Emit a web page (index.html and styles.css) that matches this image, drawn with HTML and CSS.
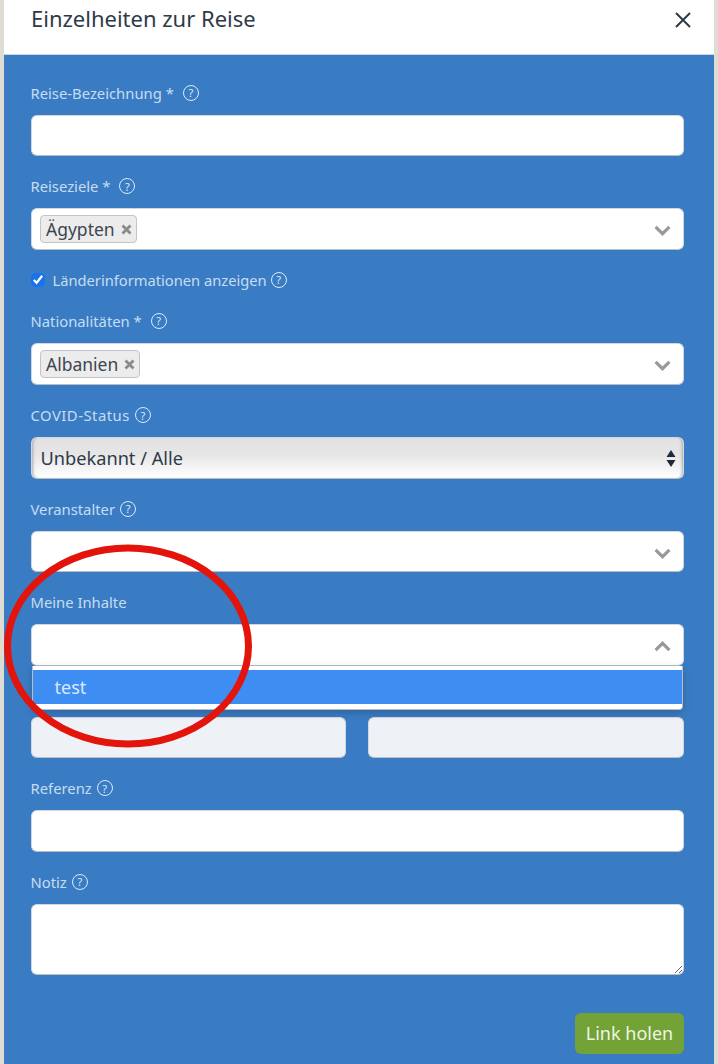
FILE: index.html
```html
<!DOCTYPE html>
<html lang="de">
<head>
    <meta charset="UTF-8">
    <meta name="viewport" content="width=device-width, initial-scale=1.0">
    <title>Einzelheiten zur Reise</title>
    <link rel="stylesheet" href="styles.css">
</head>
<body>
    <div class="modal">
        <header class="modal-header">
            <h1>Einzelheiten zur Reise</h1>
            <button type="button" class="close" aria-label="Schließen">
                <svg width="16" height="16" viewBox="0 0 16 16"><path d="M1 1 15 15M15 1 1 15" stroke="#2f3a47" stroke-width="2" fill="none"/></svg>
            </button>
        </header>
        <form class="modal-body">
            <div class="field">
                <label>Reise-Bezeichnung * <span class="help wide">?</span></label>
                <input type="text" class="control">
            </div>
            <div class="field">
                <label>Reiseziele * <span class="help wide">?</span></label>
                <div class="control multi">
                    <span class="chip">Ägypten <svg width="11" height="11" viewBox="0 0 11 11"><path d="M1.500 1.500 9.500 9.500M9.500 1.500 1.500 9.500" stroke="#8a8a8a" stroke-width="2.800" fill="none"/></svg></span>
                    <svg class="chevron" width="17" height="11" viewBox="0 0 16 10"><path d="M1.500 1.500 8 8l6.500-6.500" stroke="#999" stroke-width="3" fill="none"/></svg>
                </div>
            </div>
            <div class="check-row">
                <input type="checkbox" checked>
                <span>Länderinformationen anzeigen</span>
                <span class="help">?</span>
            </div>
            <div class="field">
                <label>Nationalitäten * <span class="help wide">?</span></label>
                <div class="control multi tall">
                    <span class="chip">Albanien <svg width="11" height="11" viewBox="0 0 11 11"><path d="M1.500 1.500 9.500 9.500M9.500 1.500 1.500 9.500" stroke="#8a8a8a" stroke-width="2.800" fill="none"/></svg></span>
                    <svg class="chevron" width="17" height="11" viewBox="0 0 16 10"><path d="M1.500 1.500 8 8l6.500-6.500" stroke="#999" stroke-width="3" fill="none"/></svg>
                </div>
            </div>
            <div class="field">
                <label><span class="caps">COVID-Status</span> <span class="help">?</span></label>
                <div class="control native-select">
                    <span>Unbekannt / Alle</span>
                    <svg width="10" height="17" viewBox="0 0 10 17"><path d="M5 0 9.500 7H.5ZM5 17 .5 10h9Z" fill="#1f2a3a"/></svg>
                </div>
            </div>
            <div class="field">
                <label>Veranstalter <span class="help">?</span></label>
                <div class="control multi">
                    <svg class="chevron" width="17" height="11" viewBox="0 0 16 10"><path d="M1.500 1.500 8 8l6.500-6.500" stroke="#999" stroke-width="3" fill="none"/></svg>
                </div>
            </div>
            <div class="field open">
                <label>Meine Inhalte</label>
                <div class="control multi">
                    <svg class="chevron" width="17" height="11" viewBox="0 0 16 10"><path d="M1.500 8.500 8 2l6.500 6.500" stroke="#999" stroke-width="3" fill="none"/></svg>
                </div>
                <div class="dropdown">
                    <div class="option">test</div>
                </div>
            </div>
            <div class="field two-col">
                <input type="text" class="control" disabled>
                <input type="text" class="control" disabled>
            </div>
            <div class="field">
                <label>Referenz <span class="help">?</span></label>
                <input type="text" class="control">
            </div>
            <div class="field">
                <label>Notiz <span class="help">?</span></label>
                <textarea class="control notes"></textarea>
            </div>
            <div class="actions">
                <button type="button" class="submit">Link holen</button>
            </div>
        </form>
        <svg class="marker" width="256" height="210" viewBox="0 0 256 210">
            <ellipse cx="124" cy="103" rx="120.500" ry="98" fill="none" stroke="#e2140c" stroke-width="7"/>
        </svg>
    </div>
</body>
</html>
```

FILE: styles.css
```css
html, body {
    height: 100%;
}

body {
    margin: 0;
    padding: 0 4px;
    background-color: #dfdcd6;
    font-family: "Noto Sans", sans-serif;
    overflow: hidden;
}

.modal {
    position: relative;
    height: 1064px;
    background: #3a7cc3;
}

.modal-header {
    display: flex;
    align-items: center;
    justify-content: space-between;
    height: 55px;
    padding: 0 23px 15px 27px;
    box-sizing: border-box;
    background: #ffffff;
    border-bottom: 1px solid #c9d6e2;
}

.modal-header h1 {
    margin: 0 0 4px;
    font-size: 22px;
    font-weight: 400;
    color: #2f3a47;
}

.close {
    padding: 0;
    border: none;
    background: none;
    line-height: 0;
}

.modal-body {
    padding: 27.900px 30px 0 26.500px;
}

.field {
    position: relative;
    margin-bottom: 20px;
}

label {
    display: flex;
    align-items: center;
    gap: 5px;
    height: 20px;
    margin-bottom: 12px;
    font-size: 14.800px;
    color: #c6dcf2;
}

.caps {
    letter-spacing: 0.5px;
}

.help {
    display: inline-flex;
    align-items: center;
    justify-content: center;
    width: 14px;
    height: 14px;
    border: 1.500px solid #dcebf9;
    border-radius: 50%;
    font-size: 11px;
    line-height: 1;
    color: #dcebf9;
}

.help.wide {
    margin-left: 4px;
}

.control {
    display: block;
    width: 100%;
    height: 41.500px;
    box-sizing: border-box;
    border: 1px solid #d3d7dc;
    border-bottom-color: #b8bec6;
    border-radius: 6px;
    background: #ffffff;
}

.multi {
    position: relative;
    display: flex;
    align-items: center;
    padding-left: 8.500px;
}

.multi.tall {
    height: 42.500px;
}

.chevron {
    position: absolute;
    right: 12px;
    top: 16px;
}

.chip {
    display: inline-flex;
    align-items: center;
    height: 28px;
    padding: 0 4px 0 5px;
    box-sizing: border-box;
    gap: 6px;
    border: 1px solid #c4c4c4;
    border-radius: 4px;
    background: #ececec;
    font-size: 17.500px;
    color: #3d4650;
}

.check-row {
    display: flex;
    align-items: center;
    gap: 8px;
    height: 22px;
    margin: -1px 0 20px;
    font-size: 14.700px;
    color: #c6dcf2;
}

.check-row input {
    width: 14px;
    height: 14px;
    margin: 0;
    accent-color: #1a73e8;
}

.check-row .help {
    margin-left: -4px;
}

.native-select {
    display: flex;
    align-items: center;
    justify-content: space-between;
    padding: 0 7px 0 9px;
    background: linear-gradient(#e2e2e2, #e6e6e6 40%, #ffffff);
    box-shadow: inset 3px 0 3px -2px #a9a9a9, inset -3px 0 3px -2px #a9a9a9;
    font-size: 18.200px;
    color: #2f3a47;
}

.dropdown {
    position: absolute;
    top: 73.500px;
    left: 1px;
    right: 1px;
    z-index: 2;
    padding: 4px 0 5px;
    background: #ffffff;
    border: 1px solid #b9bec5;
    border-top: none;
    border-radius: 0 0 4px 4px;
    box-shadow: 0 3px 8px rgba(0, 0, 0, 0.2);
}

.option {
    height: 34px;
    padding-left: 22px;
    background: #3e8df2;
    font-size: 18px;
    line-height: 34px;
    color: #dcebfb;
}

.two-col {
    display: grid;
    grid-template-columns: 315px 316px;
    justify-content: space-between;
    padding-top: 31px;
}

.two-col .control {
    background: #eef1f6;
}

.notes {
    height: 71px;
    margin-top: 1px;
    resize: vertical;
}

.field:has(.notes) {
    margin-bottom: 38px;
}

.actions {
    display: flex;
    justify-content: flex-end;
}

.submit {
    width: 109px;
    height: 41px;
    border: none;
    border-radius: 6px;
    background: #73a336;
    font-family: inherit;
    font-size: 18px;
    color: #eef5e4;
}

.marker {
    position: absolute;
    left: 0;
    top: 543px;
    z-index: 3;
}
```
